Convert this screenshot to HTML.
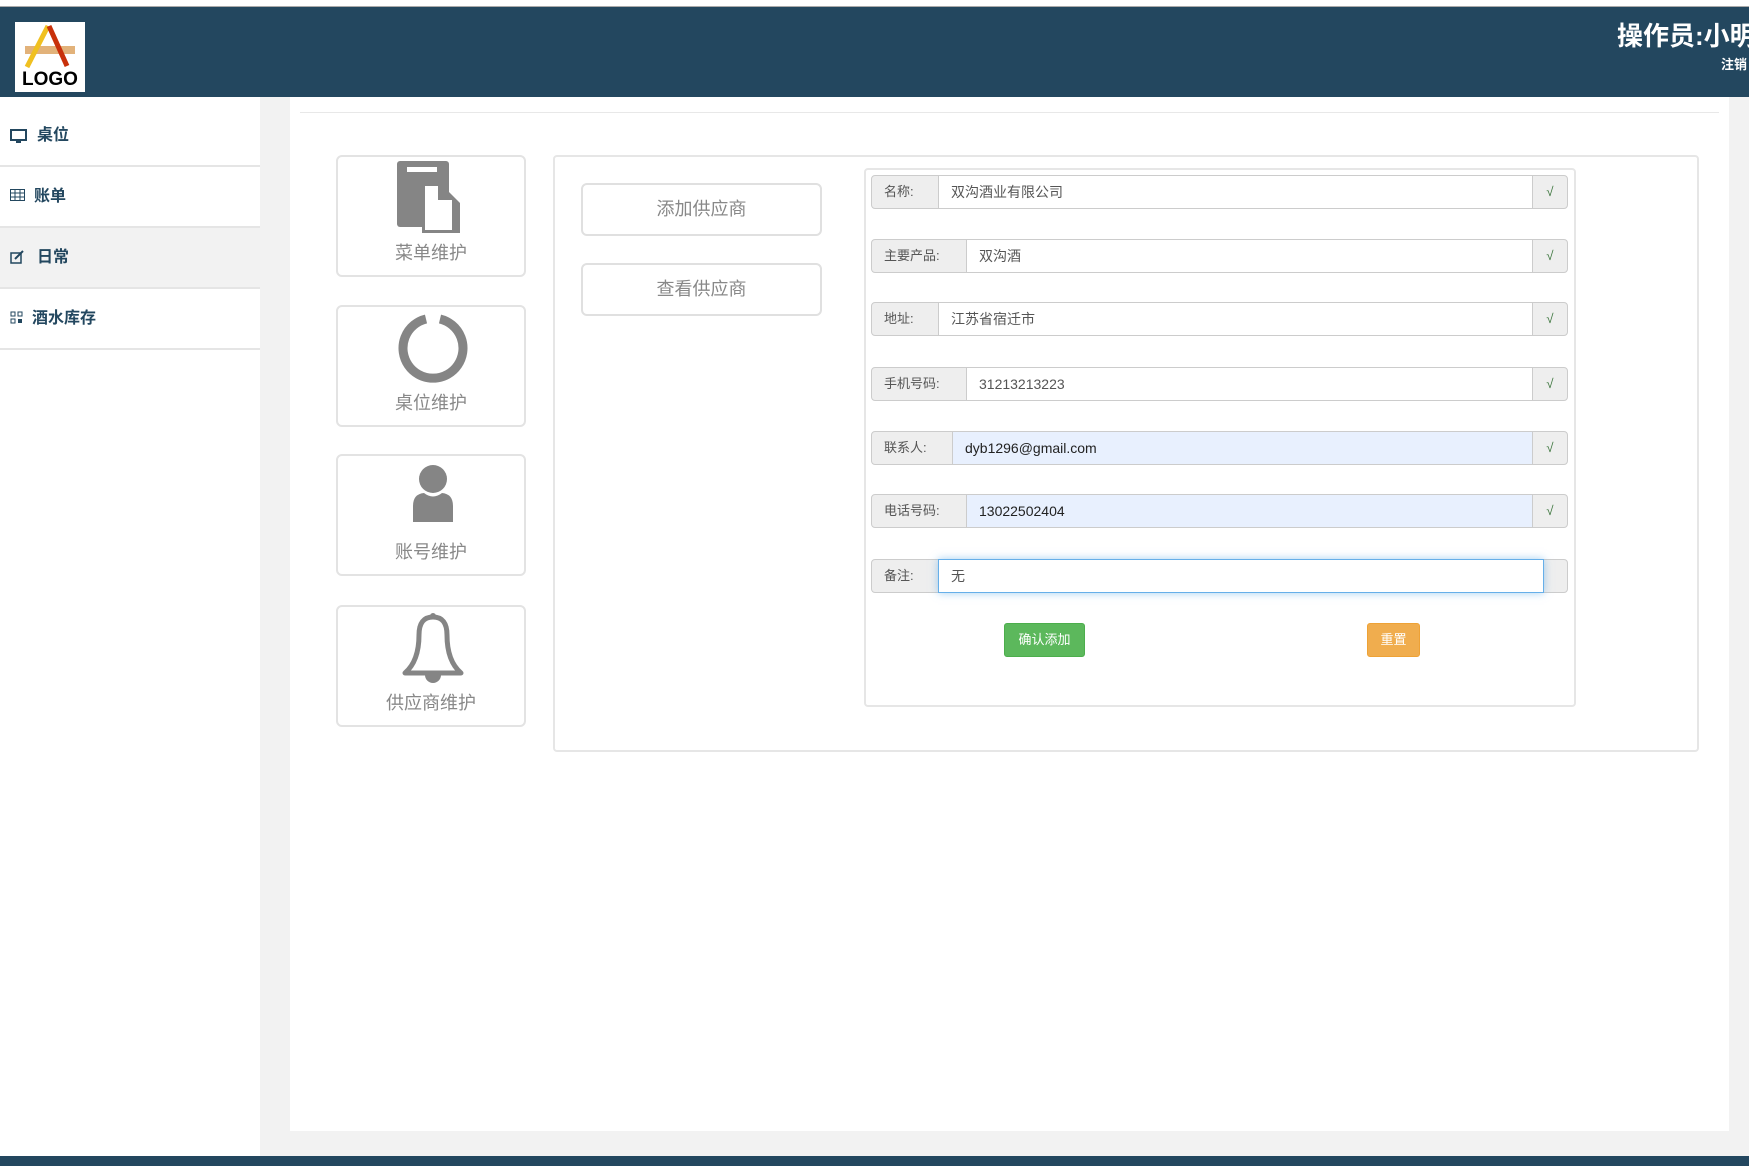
<!DOCTYPE html>
<html><head><meta charset="utf-8"><style>
*{box-sizing:border-box;margin:0;padding:0}
body{width:1749px;height:1166px;overflow:hidden;background:#f2f2f2;font-family:"Liberation Sans","Noto Sans CJK SC",sans-serif;position:relative}
.abs{position:absolute}
.top{left:0;top:0;width:1749px;height:7px;background:#fff;border-bottom:1px solid #aaa}
.hdr{left:0;top:7px;width:1749px;height:90px;background:#23475f}
.logo{left:15px;top:22px;width:70px;height:70px;background:#fff}
.op{left:1617px;top:16px;color:#fff;font-size:26px;font-weight:bold;white-space:nowrap}
.out{left:1721px;top:54px;color:#fff;font-size:13px;font-weight:bold;white-space:nowrap}
.side{left:0;top:97px;width:260px;height:1059px;background:#fff}
.si{position:absolute;left:0;width:260px;height:61px;border-bottom:2px solid #e5e5e5;color:#23475f;font-size:16px;font-weight:bold;line-height:60px}
.si span{position:absolute;left:37px}
.si svg{position:absolute;left:10px;top:22px}
.main{left:290px;top:97px;width:1439px;height:1034px;background:#fff}
.hl{left:300px;top:112px;width:1419px;height:1px;background:#e8e8e8}
.bot{left:0;top:1156px;width:1749px;height:10px;background:#23475f}
.card{position:absolute;left:336px;width:190px;height:122px;border:2px solid #e3e3e3;border-radius:6px;text-align:center;color:#888;font-size:18px}
.card .t{position:absolute;left:0;right:0;top:82px}
.card svg{position:absolute;left:59px;top:4px}
.panel{left:553px;top:155px;width:1146px;height:597px;border:2px solid #e6e6e6;border-radius:4px}
.btn{position:absolute;left:581px;width:241px;height:53px;border:2px solid #e0e0e0;border-radius:6px;text-align:center;line-height:49px;color:#888;font-size:18px}
.form{left:864px;top:168px;width:712px;height:539px;border:2px solid #e6e6e6;border-radius:4px}
.row{position:absolute;left:871px;width:697px;height:34px;border:1px solid #ccc;border-radius:4px;background:#eee;font-size:13px}
.row .l{position:absolute;left:12px;top:0;line-height:32px;color:#555}
.row .i{position:absolute;top:-1px;bottom:-1px;right:34px;background:#fff;border:1px solid #ccc;line-height:32px;padding-left:12px;color:#555;font-size:14px}
.row .i.b{background:#e8f0fe;color:#222}
.row .c{position:absolute;right:0;width:34px;top:0;line-height:32px;text-align:center;color:#3c763d;font-size:13px}
.g{left:1004px;top:623px;width:81px;height:34px;background:#5cb85c;border:1px solid #4cae4c;border-radius:3px;color:#fff;font-size:13px;text-align:center;line-height:32px}
.o{left:1367px;top:623px;width:53px;height:34px;background:#f0ad4e;border:1px solid #eea236;border-radius:3px;color:#fff;font-size:13px;text-align:center;line-height:32px}
</style></head><body>
<div class="abs top"></div>
<div class="abs hdr"></div>
<div class="abs logo">
<svg width="70" height="70" viewBox="0 0 70 70"><rect x="10" y="24" width="50" height="8" fill="#e2b27a"/><path d="M33 4 L12 45" stroke="#f0c020" stroke-width="5"/><path d="M34 4 L52 44" stroke="#c8300a" stroke-width="5"/><text x="35" y="63" font-family="Liberation Sans" font-weight="bold" font-size="19" text-anchor="middle" fill="#000">LOGO</text></svg>
</div>
<div class="abs op">操作员:小明</div>
<div class="abs out">注销</div>
<div class="abs side">
<div class="si" style="top:0;height:70px;line-height:78px"><svg width="17" height="15" viewBox="0 0 17 15" style="top:32px"><rect x="1" y="1" width="15" height="10" fill="none" stroke="#23475f" stroke-width="2"/><rect x="6" y="11" width="5" height="3" fill="#23475f"/></svg><span>桌位</span></div>
<div class="si" style="top:70px"><svg width="15" height="13" viewBox="0 0 15 13"><rect x="0.5" y="0.5" width="14" height="11" fill="none" stroke="#23475f"/><path d="M0 4h15M0 8h15M5 0v12M10 0v12" stroke="#23475f"/></svg><span style="left:34px">账单</span></div>
<div class="si" style="top:131px;background:#f2f2f2"><svg width="15" height="14" viewBox="0 0 15 14"><rect x="1" y="3" width="10" height="10" fill="none" stroke="#23475f" stroke-width="1.5"/><path d="M5 9l8-8" stroke="#23475f" stroke-width="2"/></svg><span>日常</span></div>
<div class="si" style="top:192px"><svg width="13" height="13" viewBox="0 0 13 13"><rect x="1" y="1" width="4" height="4" fill="none" stroke="#23475f"/><rect x="8" y="1" width="4" height="4" fill="none" stroke="#23475f"/><rect x="1" y="8" width="4" height="4" fill="none" stroke="#23475f"/><rect x="8" y="8" width="4" height="4" fill="#23475f"/></svg><span style="left:32px">酒水库存</span></div>
</div>
<div class="abs main"></div>
<div class="abs hl"></div>
<div class="card" style="top:155px"><svg width="72" height="74" viewBox="0 0 72 74"><rect x="0" y="0" width="52" height="66" rx="3" fill="#858585"/><rect x="10" y="6" width="30" height="5" fill="#fff"/><path d="M25 22h18l20 20v30h-38z" fill="#858585"/><path d="M28 25h13v14h14v30h-27z" fill="#fff"/></svg><div class="t">菜单维护</div></div>
<div class="card" style="top:305px"><svg width="72" height="74" viewBox="0 0 72 74"><path d="M29 8 A30 30 0 1 0 43 8" fill="none" stroke="#858585" stroke-width="9"/></svg><div class="t">桌位维护</div></div>
<div class="card" style="top:454px"><svg width="72" height="74" viewBox="0 0 72 74"><circle cx="36" cy="19" r="14" fill="#858585"/><path d="M16 62 V46 Q16 34 27 33 Q36 40 45 33 Q56 34 56 46 V62 Z" fill="#858585"/></svg><div class="t">账号维护</div></div>
<div class="card" style="top:605px"><svg width="72" height="74" viewBox="0 0 72 74"><path d="M36 6 Q22 6 22 24 Q22 50 8 62 H64 Q50 50 50 24 Q50 6 36 6Z" fill="none" stroke="#858585" stroke-width="5" stroke-linejoin="round"/><circle cx="36" cy="5" r="3" fill="#858585"/><path d="M28 64 A8 8 0 0 0 44 64Z" fill="#858585"/></svg><div class="t">供应商维护</div></div>
<div class="abs panel"></div>
<div class="btn" style="top:183px">添加供应商</div>
<div class="btn" style="top:263px">查看供应商</div>
<div class="abs form"></div>
<div class="row" style="top:175px"><span class="l">名称:</span><div class="i" style="left:66px">双沟酒业有限公司</div><span class="c">√</span></div>
<div class="row" style="top:239px"><span class="l">主要产品:</span><div class="i" style="left:94px">双沟酒</div><span class="c">√</span></div>
<div class="row" style="top:302px"><span class="l">地址:</span><div class="i" style="left:66px">江苏省宿迁市</div><span class="c">√</span></div>
<div class="row" style="top:367px"><span class="l">手机号码:</span><div class="i" style="left:94px">31213213223</div><span class="c">√</span></div>
<div class="row" style="top:431px"><span class="l">联系人:</span><div class="i b" style="left:80px">dyb1296@gmail.com</div><span class="c">√</span></div>
<div class="row" style="top:494px"><span class="l">电话号码:</span><div class="i b" style="left:94px">13022502404</div><span class="c">√</span></div>
<div class="row" style="top:559px"><span class="l">备注:</span><div class="i" style="left:66px;right:23px;border:1px solid #66afe9;box-shadow:0 0 8px rgba(102,175,233,.6)">无</div></div>
<div class="abs g">确认添加</div>
<div class="abs o">重置</div>
<div class="abs bot"></div>
</body></html>
